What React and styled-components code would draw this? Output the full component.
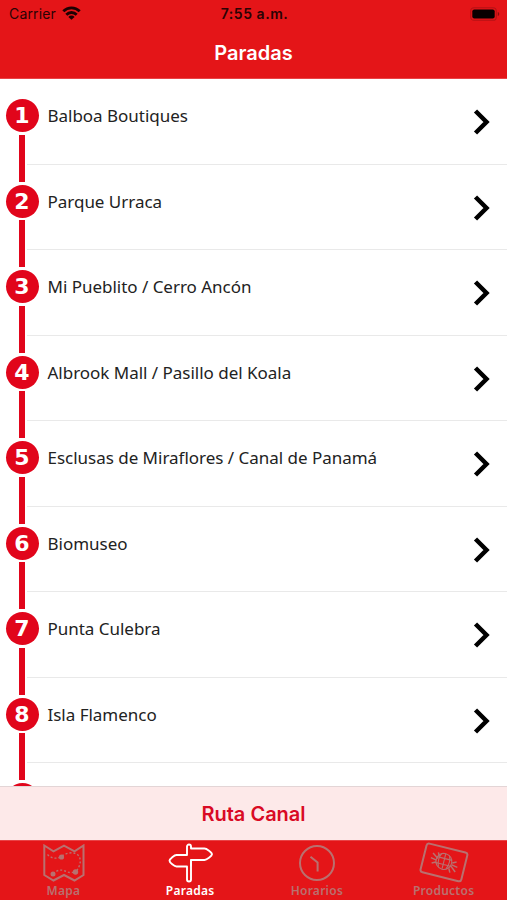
import styled, { createGlobalStyle } from "styled-components";

const stops = [
  "Balboa Boutiques",
  "Parque Urraca",
  "Mi Pueblito / Cerro Ancón",
  "Albrook Mall / Pasillo del Koala",
  "Esclusas de Miraflores / Canal de Panamá",
  "Biomuseo",
  "Punta Culebra",
  "Isla Flamenco",
];

const WifiIcon = () => (
  <svg width="19" height="14" viewBox="0 0 19 14">
    <g fill="none" stroke="#1d0102" strokeWidth="2.8">
      <path d="M1.3 5.2a11.6 11.6 0 0 1 16.4 0" />
      <path d="M4.3 8.7a7.3 7.3 0 0 1 10.4 0" />
    </g>
    <path d="M9.5 13.8 6.4 10.9a4.2 4.2 0 0 1 6.2 0z" fill="#1d0102" />
  </svg>
);

const BatteryIcon = () => (
  <svg width="30" height="14" viewBox="0 0 30 14">
    <rect x="0.7" y="0.7" width="25.6" height="12.6" rx="3.4" fill="none" stroke="#b51215" strokeWidth="1.1" />
    <rect x="2.3" y="2.4" width="22.4" height="9.2" rx="2" fill="#080000" />
    <path d="M27.8 5v4c.9-.3 1.4-1.1 1.4-2s-.5-1.7-1.4-2z" fill="#8a0b0e" />
  </svg>
);

const ChevronIcon = () => (
  <svg width="18" height="26" viewBox="0 0 18 26">
    <path d="M2.5 2 13.5 13 2.5 24" fill="none" stroke="#000" strokeWidth="4.5" />
  </svg>
);

const MapIcon = () => (
  <svg width="42" height="38" viewBox="0 0 42 38" fill="none" stroke="currentColor">
    <path d="M1.3 1.5 10.5 7.3 21 1.7 31.5 7.3 40.5 1.5V31L31.5 36.5 21 31 10.5 36.5 1.3 31z" strokeWidth="2" />
    <path d="M4.5 10.5c3 3 7 5 13 2.500 5-4 14-6.500 18.500-1 2.500 5 1 10-2.500 15M10 29.500c5-4 9-4 12-2.500s6 2 9 1" strokeWidth="1.4" strokeDasharray="2 2" />
    <g fill="currentColor" stroke="none">
      <circle cx="18.5" cy="13" r="2.6" />
      <circle cx="10" cy="30" r="2.5" />
      <circle cx="32.5" cy="28" r="2.7" />
    </g>
  </svg>
);

const SignIcon = () => (
  <svg width="46" height="40" viewBox="0 0 46 40" fill="none" stroke="currentColor" strokeWidth="1.9" strokeLinejoin="round">
    <path d="M19 12V3.500a2 2 0 0 1 4 0V5.500H36.500C38.500 5.500 44 9.500 44 11.300S38.500 17 36.500 17H23V36.500a2 2 0 0 1-4 0V23.500H8.500C6.500 23.500 1.500 19.500 1.500 17.700S6.500 12 8.500 12z" />
    <path d="M23 16.5v7" strokeWidth="1.6" />
  </svg>
);

const ClockIcon = () => (
  <svg width="38" height="38" viewBox="0 0 38 38" fill="none" stroke="currentColor" strokeWidth="2">
    <circle cx="19" cy="19" r="17" />
    <path d="M12.5 12.8 19.6 18.5V27.5" />
  </svg>
);

const TicketIcon = () => (
  <svg width="50" height="42" viewBox="0 0 50 42" fill="none" stroke="currentColor">
    <g transform="rotate(14 25 21)">
      <rect x="3.8" y="5.7" width="42" height="29.5" rx="2.5" strokeWidth="2" />
      <g strokeWidth="1.1">
        <circle cx="24.5" cy="19.5" r="8" />
        <path d="M16.8 16.5h15.4M16.8 22.5h15.4M24.5 11.5v15.5" />
        <path d="M20.5 12.5c-2 4-2 9 0 13.500M28.500 12.500c2 4 2 9 0 13.500" />
      </g>
      <path d="m18 18-6-4m5 6-6-1m6 3-4 2m6-8-2-4m15 10 6 5m-5-6 6 1m-6-3 4-2m-6 8 2 4" strokeWidth="1.5" />
    </g>
  </svg>
);

const tabs = [
  { label: "Mapa", icon: <MapIcon /> },
  { label: "Paradas", icon: <SignIcon />, active: true },
  { label: "Horarios", icon: <ClockIcon /> },
  { label: "Productos", icon: <TicketIcon /> },
];

const App = () => {
  return (
    <Screen>
      <GlobalStyle />
      <Header>
        <StatusBar>
          <Carrier>
            <span>Carrier</span>
            <WifiIcon />
          </Carrier>
          <Time>7:55 a.m.</Time>
          <Battery>
            <BatteryIcon />
          </Battery>
        </StatusBar>
        <Title>Paradas</Title>
      </Header>
      <StopList>
        {stops.map((name, i) => (
          <StopRow key={name}>
            <Rail>
              <Segment $hidden={i === 0} />
              <Badge>{i + 1}</Badge>
              <Segment $grow />
            </Rail>
            <StopBody>
              <StopName>{name}</StopName>
              <ChevronIcon />
            </StopBody>
          </StopRow>
        ))}
        {/* next stop, only its top edge is above the route bar */}
        <StopRow>
          <Rail>
            <Segment />
            <Badge />
          </Rail>
        </StopRow>
      </StopList>
      <RouteBar>Ruta Canal</RouteBar>
      <TabBar>
        {tabs.map(({ label, icon, active }) => (
          <Tab key={label} $active={active}>
            <TabIcon>{icon}</TabIcon>
            <span>{label}</span>
          </Tab>
        ))}
      </TabBar>
    </Screen>
  );
};

const GlobalStyle = createGlobalStyle`
  * {
    box-sizing: border-box;
  }
  body {
    margin: 0;
    background: #fff;
  }
`;

const Screen = styled.div`
  width: 507px;
  height: 900px;
  display: flex;
  flex-direction: column;
  overflow: hidden;
  background: #fff;
  font-family: Inter, sans-serif;
`;

const Header = styled.header`
  flex: none;
  height: 79px;
  background: #e41518;
  border-bottom: 1px solid #e94346;
`;

const StatusBar = styled.div`
  height: 27px;
  display: grid;
  grid-template-columns: 1fr auto 1fr;
  align-items: center;
  padding: 0 7px 0 9px;
  color: #2a0304;
  font-size: 14px;
  line-height: 27px;
`;

const Carrier = styled.div`
  display: flex;
  align-items: center;
  gap: 6px;
  letter-spacing: 0.15px;
  svg {
    margin-top: -2px;
  }
`;

const Time = styled.span`
  font-weight: 600;
  letter-spacing: 0.55px;
`;

const Battery = styled.div`
  display: flex;
  justify-content: flex-end;
`;

const Title = styled.h1`
  margin: 0;
  color: #fff;
  font-size: 20px;
  font-weight: 600;
  line-height: 52px;
  text-align: center;
`;

const StopList = styled.div`
  flex: 1;
  min-height: 0;
  overflow: hidden;
`;

const StopRow = styled.div`
  height: 85.5px;
  display: flex;
`;

const Rail = styled.div`
  flex: none;
  width: 27px;
  padding-left: 5.5px;
  display: flex;
  flex-direction: column;
  align-items: flex-start;
`;

const Segment = styled.div`
  flex: ${({ $grow }) => ($grow ? "1" : "0 0 17px")};
  width: 6px;
  margin-left: 13.5px;
  background: ${({ $hidden }) => ($hidden ? "transparent" : "#e1051b")};
`;

const Badge = styled.div`
  flex: none;
  width: 33px;
  height: 33px;
  margin: 3.3px 0 2.7px;
  border-radius: 50%;
  background: #e1051b;
  color: #fff;
  font-family: "DejaVu Sans", sans-serif;
  font-size: 22px;
  font-weight: 700;
  line-height: 34px;
  text-align: center;
`;

const StopBody = styled.div`
  flex: 1;
  display: flex;
  align-items: flex-start;
  justify-content: space-between;
  padding: 25px 16px 0 20.5px;
  border-bottom: 1px solid #e9e9e9;
  svg {
    margin-top: 5px;
  }
`;

const StopName = styled.span`
  color: #222;
  font-family: "Noto Sans", sans-serif;
  font-size: 17px;
  letter-spacing: -0.02px;
  line-height: 24px;
`;

const RouteBar = styled.div`
  flex: none;
  height: 54px;
  background: #fde9e9;
  border-top: 1px solid #e3d5d6;
  color: #d90a24;
  font-size: 20px;
  font-weight: 600;
  line-height: 54px;
  text-align: center;
`;

const TabBar = styled.nav`
  flex: none;
  height: 60px;
  display: grid;
  grid-template-columns: repeat(4, 1fr);
  background: #e41518;
  border-top: 1px solid #e94346;
`;

const Tab = styled.div`
  display: flex;
  flex-direction: column;
  align-items: center;
  color: ${({ $active }) => ($active ? "#fff" : "#b9706f")};
  font-family: "Noto Sans", sans-serif;
  font-size: 12px;
  font-weight: 600;
  letter-spacing: 0.25px;
  line-height: 14px;
`;

const TabIcon = styled.div`
  height: 43px;
  padding: 1px 0 0 1px;
  display: flex;
  align-items: center;
`;

export default App;
